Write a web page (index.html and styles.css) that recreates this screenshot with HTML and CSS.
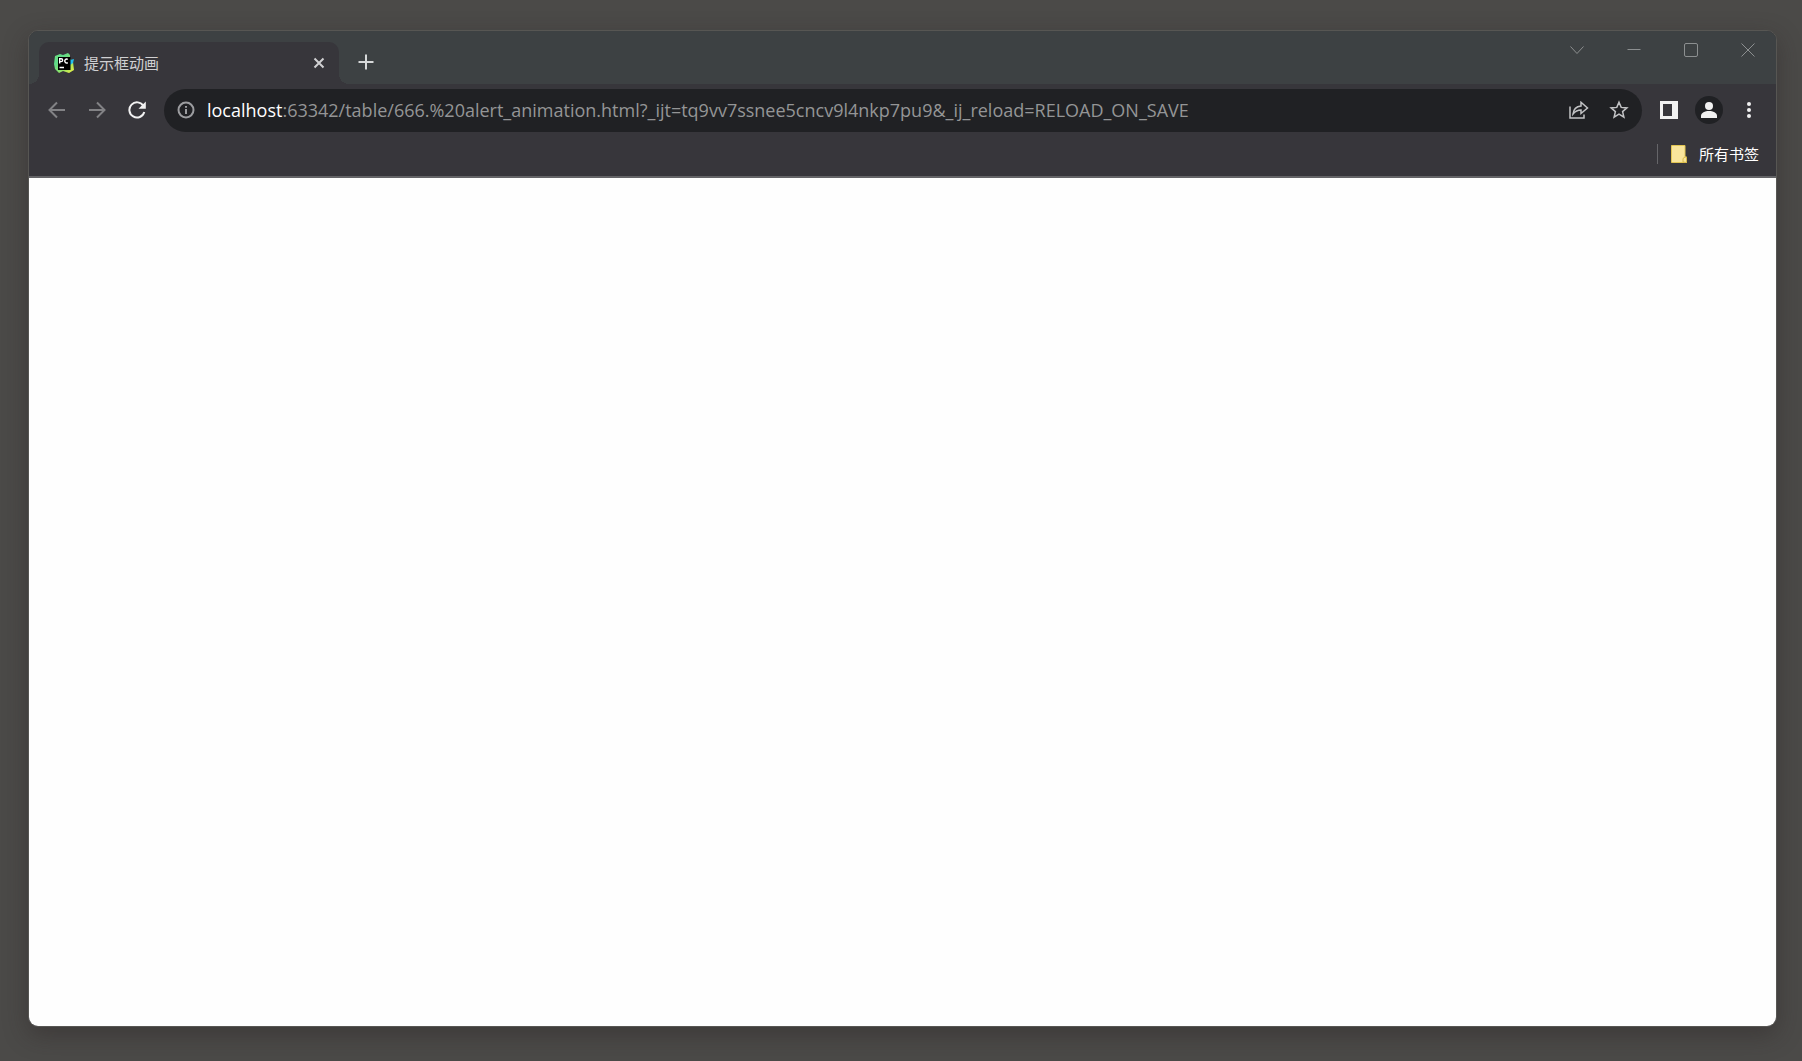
FILE: index.html
```html
<!DOCTYPE html>
<html lang="zh-CN">
<head>
    <meta charset="UTF-8">
    <title>提示框动画</title>
    <link rel="stylesheet" href="styles.css">
</head>
<body>
    <div class="window">
        <header class="tabstrip">
            <div class="tab">
                <svg class="favicon" width="20" height="20" viewBox="0 0 20 20">
                    <defs>
                        <linearGradient id="pc" x1="0" y1="0" x2="1" y2="1">
                            <stop offset="0" stop-color="#6fe07a"/>
                            <stop offset="0.3" stop-color="#5fd98a"/>
                            <stop offset="0.6" stop-color="#8be36a"/>
                            <stop offset="1" stop-color="#f3f03f"/>
                        </linearGradient>
                    </defs>
                    <path fill="url(#pc)" d="M1 3L6 1L9 2L14 0L16 2L16 6L19 9L20 17L15 20L9 18L5 20L1 16L0 11Z"/>
                    <path fill="#21bdee" d="M16 7L20 6L19 10L16 12Z"/>
                    <path fill="#000" d="M4 4h12.500v13H4z"/>
                    <path fill="none" stroke="#fff" stroke-width="1.4" d="M5.700 10.500V5.700h1.500a1.400 1.400 0 0 1 0 2.900H5.700M13.800 6.300a2 2 0 1 0 0 3.400M5.500 14.500h4.500"/>
                </svg>
                <span class="tab-title">提示框动画</span>
                <button class="tab-close" aria-label="关闭标签页">
                    <svg width="12" height="12" viewBox="0 0 12 12"><path d="M1.500 1.500L10.500 10.500M10.500 1.500L1.500 10.500"/></svg>
                </button>
            </div>
            <button class="new-tab" aria-label="新标签页">
                <svg width="16" height="16" viewBox="0 0 16 16"><path d="M8 0.500V15.500M0.500 8H15.500"/></svg>
            </button>
            <div class="window-controls">
                <button aria-label="搜索标签页"><svg width="14" height="14" viewBox="0 0 14 14"><path d="M0.500 3.500L7 10.500L13.500 3.500"/></svg></button>
                <button aria-label="最小化"><svg width="14" height="14" viewBox="0 0 14 14"><path d="M0.500 6.500H13.500"/></svg></button>
                <button aria-label="最大化"><svg width="14" height="14" viewBox="0 0 14 14"><rect x="0.500" y="0.500" width="13" height="13" rx="1.500"/></svg></button>
                <button aria-label="关闭"><svg width="14" height="14" viewBox="0 0 14 14"><path d="M0.500 0.500L13.500 13.500M13.500 0.500L0.500 13.500"/></svg></button>
            </div>
        </header>

        <nav class="toolbar">
            <button class="icon-btn dim" aria-label="后退">
                <svg width="18" height="18" viewBox="0 0 18 18"><path d="M17 9H2M9 1.500L1.500 9L9 16.500"/></svg>
            </button>
            <button class="icon-btn dim" aria-label="前进">
                <svg width="18" height="18" viewBox="0 0 18 18"><path d="M1 9H16M9 1.500L16.500 9L9 16.500"/></svg>
            </button>
            <button class="icon-btn" aria-label="重新加载">
                <svg width="18" height="18" viewBox="0 0 18 18"><path d="M15.500 5A7.600 7.600 0 1 0 16.300 11"/><path class="fill" d="M17.800 0.500V7.800H10.500Z"/></svg>
            </button>
            <div class="address">
                <button class="site-info" aria-label="查看网站信息">
                    <svg width="18" height="18" viewBox="0 0 18 18"><circle cx="9" cy="9" r="7.500"/><path d="M9 8V13M9 5V6.800"/></svg>
                </button>
                <a class="url" href="#"><span class="host">localhost</span>:63342/table/666.%20alert_animation.html?_ijt=tq9vv7ssnee5cncv9l4nkp7pu9&amp;_ij_reload=RELOAD_ON_SAVE</a>
                <button class="icon-btn soft" aria-label="分享此网页">
                    <svg width="20" height="18" viewBox="0 0 20 18"><path d="M1 5.500V17H15V13.500M4 13C4.500 8 7.500 5.500 12 5V1.300L18.500 7L12 12.500V9C8.500 9 6 10.500 4 13Z"/></svg>
                </button>
                <button class="icon-btn soft" aria-label="为此网页添加书签">
                    <svg width="20" height="20" viewBox="0 0 20 20"><path d="M10 2.200L12.200 7.400L17.900 7.900L13.600 11.600L14.900 17.200L10 14.200L5.100 17.200L6.400 11.600L2.100 7.900L7.800 7.400Z"/></svg>
                </button>
            </div>
            <button class="icon-btn" aria-label="侧边栏">
                <svg width="18" height="18" viewBox="0 0 18 18"><path class="fill" fill-rule="evenodd" d="M0 0H18V18H0ZM3 3V15H12V3Z"/></svg>
            </button>
            <button class="icon-btn" aria-label="用户">
                <svg width="28" height="28" viewBox="0 0 28 28"><circle class="avatar-bg" cx="14" cy="14" r="14"/><circle class="fill" cx="14" cy="10" r="4"/><path class="fill" d="M6 22V20C6 16.500 10 15 14 15S22 16.500 22 20V22Z"/></svg>
            </button>
            <button class="icon-btn" aria-label="菜单">
                <svg width="18" height="18" viewBox="0 0 18 18"><circle class="fill" cx="9" cy="3" r="2"/><circle class="fill" cx="9" cy="9" r="2"/><circle class="fill" cx="9" cy="15" r="2"/></svg>
            </button>
        </nav>

        <div class="bookmarks">
            <button class="all-bookmarks">
                <svg width="16" height="18" viewBox="0 0 16 18"><path fill="#f9e59b" stroke="#e2c552" d="M0.500 0.500H14V12H15.500V17.500H0.500Z"/><path fill="#f9e59b" stroke="#d8ba48" d="M12 17V13.500L14 12H15.500V17.500Z"/></svg>
                所有书签
            </button>
        </div>

        <main class="page"></main>
    </div>
</body>
</html>
```

FILE: styles.css
```css
* {
    box-sizing: border-box;
}

body {
    margin: 0;
    padding: 30px 25px 34px 28px;
    min-height: 100vh;
    display: flex;
    background: #4b4a48;
    font-family: "Open Sans", "Noto Sans CJK SC", sans-serif;
}

button {
    display: flex;
    align-items: center;
    justify-content: center;
    padding: 0;
    border: none;
    background: none;
    color: #f1f1f1;
    font-family: inherit;
    cursor: pointer;
}

svg {
    flex: none;
    fill: none;
    stroke: currentColor;
    stroke-width: 2;
}

.favicon {
    stroke: none;
}

.fill {
    fill: currentColor;
    stroke: none;
}

.window {
    flex: 1;
    min-width: 0;
    display: flex;
    flex-direction: column;
    border: 1px solid #575653;
    border-radius: 10px;
    overflow: hidden;
    background: #37363b;
    box-shadow: 0 8px 24px rgba(40, 32, 32, 0.4);
}

.tabstrip {
    display: flex;
    height: 53px;
    padding-left: 10px;
    background: #3d4143;
}

.tab {
    position: relative;
    display: flex;
    align-items: center;
    width: 300px;
    margin-top: 11px;
    padding: 0 12px 0 15px;
    border-radius: 10px 10px 0 0;
    background: #37363b;
}

/* curved feet of the active tab */
.tab::before,
.tab::after {
    content: "";
    position: absolute;
    bottom: 0;
    width: 10px;
    height: 10px;
}

.tab::before {
    right: 100%;
    background: radial-gradient(circle at 0 0, #3d4143 10px, #37363b 10px);
}

.tab::after {
    left: 100%;
    background: radial-gradient(circle at 100% 0, #3d4143 10px, #37363b 10px);
}

.tab-title {
    flex: 1;
    margin-left: 10px;
    font-size: 15px;
    line-height: 20px;
    color: #d0d0d2;
}

.tab-close {
    width: 16px;
    height: 16px;
    color: #d0d0d2;
}

.new-tab {
    width: 28px;
    height: 28px;
    margin: 17px 0 0 13px;
    color: #d6d8d9;
}

.window-controls {
    display: flex;
    height: 37px;
    margin-left: auto;
}

.window-controls button {
    width: 57px;
    color: #8c8f90;
}

.window-controls svg {
    stroke-width: 1;
}

.toolbar {
    display: flex;
    align-items: center;
    height: 52px;
    padding: 0 7px 0 8px;
}

.icon-btn {
    flex: none;
    width: 40px;
    height: 40px;
}

.dim {
    color: #828285;
}

.soft {
    color: #c2c3c5;
}

.soft svg {
    stroke-width: 1.5;
}

.avatar-bg {
    fill: #202124;
    stroke: none;
}

.address {
    flex: 1;
    min-width: 0;
    display: flex;
    align-items: center;
    height: 43px;
    margin: 0 7px;
    padding: 0 3px 0 13px;
    border-radius: 22px;
    background: #202124;
}

.site-info {
    flex: none;
    width: 18px;
    height: 18px;
    color: #9c9da0;
}

.url {
    flex: 1;
    min-width: 0;
    margin-left: 12px;
    overflow: hidden;
    white-space: nowrap;
    font-size: 18px;
    line-height: 28px;
    color: #949596;
    text-decoration: none;
}

.host {
    color: #fff;
}

.bookmarks {
    display: flex;
    justify-content: flex-end;
    align-items: center;
    height: 42px;
    padding: 0 17px 5px 0;
    border-bottom: 2px solid #646467;
}

.all-bookmarks {
    height: 20px;
    gap: 12px;
    padding-left: 13px;
    border-left: 1px solid #656569;
    font-size: 15px;
    line-height: 20px;
    color: #fff;
}

.all-bookmarks svg {
    stroke-width: 1;
}

.page {
    flex: 1;
    background: #fefefe;
}
```
